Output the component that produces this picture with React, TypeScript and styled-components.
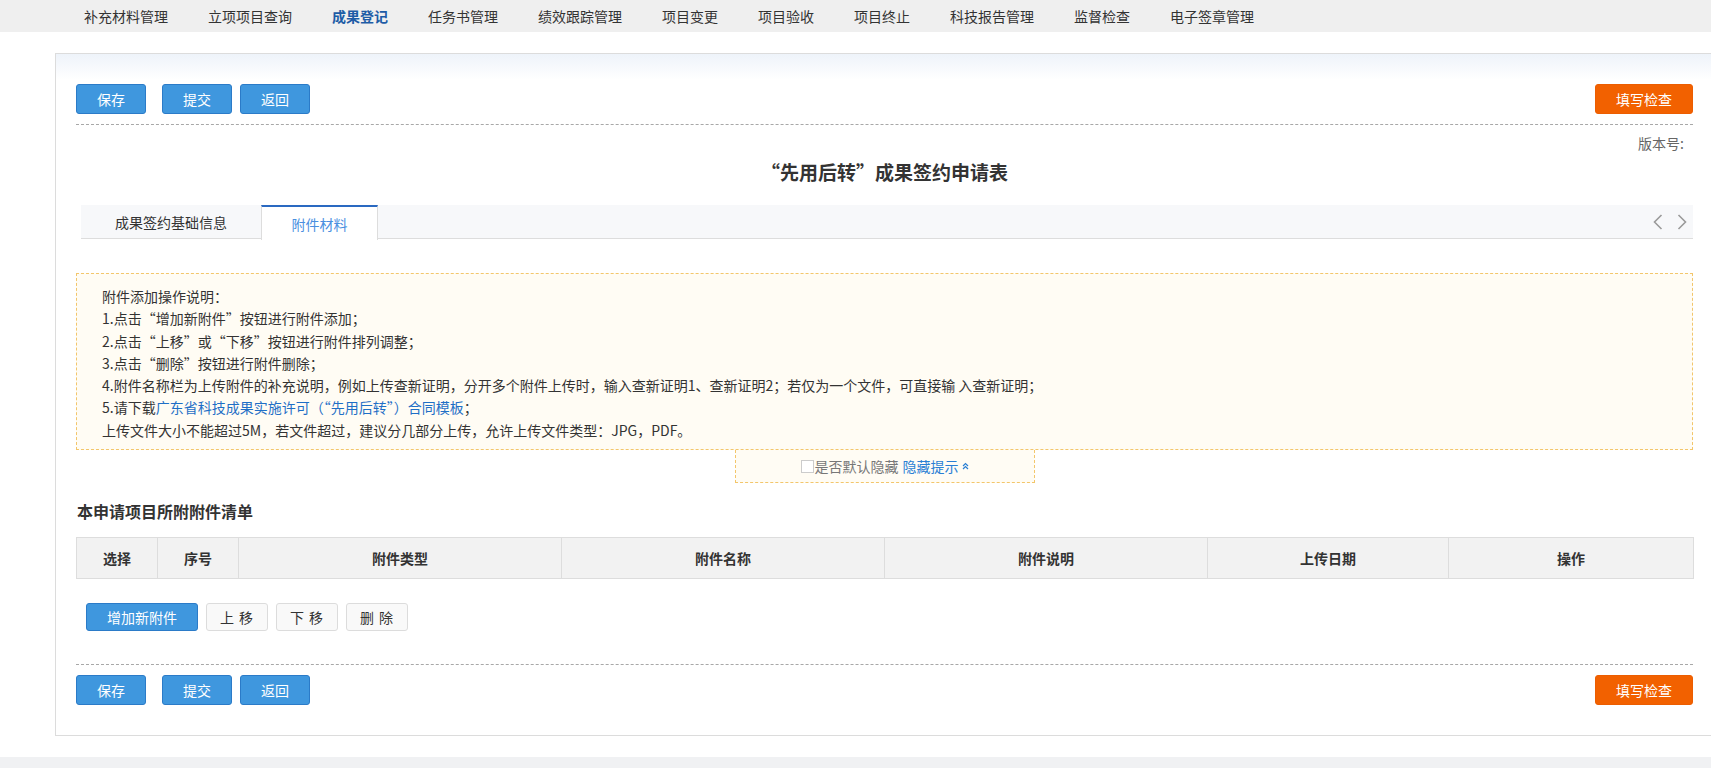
import React from "react";
import styled, { createGlobalStyle } from "styled-components";

const GlobalStyle = createGlobalStyle`
  html, body {
    margin: 0;
    padding: 0;
    background: #ffffff;
    overflow-x: hidden;
  }
  body {
    font-family: "Microsoft YaHei", "Noto Sans CJK SC", "Noto Sans", sans-serif;
    color: #333333;
    font-size: 14px;
  }
  * { box-sizing: border-box; }
`;

const Nav = styled.nav`
  height: 32px;
  background: #efefef;
  display: flex;
  align-items: center;
  padding-left: 64px;
`;

const NavItem = styled.a<{ $active?: boolean }>`
  padding: 0 20px;
  line-height: 32px;
  font-size: 14px;
  color: ${(p) => (p.$active ? "#1d5ca6" : "#333333")};
  font-weight: ${(p) => (p.$active ? 700 : 400)};
  text-decoration: none;
  white-space: nowrap;
`;

const Main = styled.main`
  padding: 21px 0 0 55px;
`;

const Card = styled.section`
  width: 1659px;
  border: 1px solid #dcdcdc;
  padding: 30px 20px 30px 20px;
  background: linear-gradient(#eef3fa 0px, #ffffff 26px);
`;

const Toolbar = styled.div<{ $mt?: number }>`
  display: flex;
  justify-content: space-between;
  align-items: center;
  margin-top: ${(p) => p.$mt ?? 0}px;
`;

const Group = styled.div`
  display: flex;
  align-items: center;
`;

const Btn = styled.button<{ $mr?: number; $w?: number; $h?: number }>`
  width: ${(p) => p.$w ?? 70}px;
  height: ${(p) => p.$h ?? 30}px;
  margin-right: ${(p) => p.$mr ?? 0}px;
  background: #3f97de;
  border: 1px solid #2b7bc8;
  border-radius: 3px;
  color: #ffffff;
  font-family: inherit;
  font-size: 14px;
  padding: 0;
  display: inline-flex;
  align-items: center;
  justify-content: center;
  cursor: pointer;
`;

const CheckBtn = styled(Btn)`
  width: 98px;
  background: #f26100;
  border-color: #ec5d00;
`;

const PlainBtn = styled.button`
  width: 62px;
  height: 28px;
  background: #f9f9f9;
  border: 1px solid #dcdcdc;
  border-radius: 3px;
  color: #333333;
  font-family: inherit;
  font-size: 14px;
  padding: 0;
  display: inline-flex;
  align-items: center;
  justify-content: center;
  letter-spacing: 1px;
`;

const Dashed = styled.hr<{ $mt: number }>`
  margin: ${(p) => p.$mt}px 0 0 0;
  border: none;
  border-top: 1px dashed #a8a8a8;
  height: 0;
`;

const Version = styled.div`
  margin-top: 8px;
  text-align: right;
  padding-right: 9px;
  line-height: 20px;
  color: #666666;
  font-size: 14px;
`;

const Title = styled.h1`
  margin: 7px 0 0 0;
  text-align: center;
  font-size: 19px;
  font-weight: 700;
  line-height: 24px;
  color: #333333;
`;

const TabBar = styled.div`
  margin: 21px 0 0 5px;
  height: 34px;
  background: #f7f8fa;
  border-bottom: 1px solid #dddddd;
  display: flex;
  align-items: stretch;
`;

const Tab = styled.div<{ $active?: boolean; $w: number }>`
  width: ${(p) => p.$w}px;
  display: flex;
  align-items: center;
  justify-content: center;
  font-size: 14px;
  color: ${(p) => (p.$active ? "#4a8fdf" : "#333333")};
  background: ${(p) => (p.$active ? "#ffffff" : "transparent")};
  border-top: ${(p) => (p.$active ? "2px solid #2a69c1" : "none")};
  border-left: ${(p) => (p.$active ? "1px solid #dddddd" : "none")};
  border-right: ${(p) => (p.$active ? "1px solid #dddddd" : "none")};
  height: ${(p) => (p.$active ? "35px" : "33px")};
  margin-bottom: ${(p) => (p.$active ? "-1px" : "0")};
`;

const Arrows = styled.div`
  margin-left: auto;
  display: flex;
  align-items: center;
  gap: 14px;
  padding-right: 6px;
`;

const Notice = styled.div`
  margin-top: 34px;
  border: 1px dashed #f3c66b;
  background: #fffcf4;
  padding: 11px 20px 8px 25px;
  line-height: 22.3px;
  font-size: 14px;
  color: #333333;
`;

const NoticeLine = styled.div``;

const Link = styled.a`
  color: #1f6fc6;
  text-decoration: none;
`;

const Toggle = styled.div`
  width: 300px;
  height: 33px;
  margin: 0 auto;
  border: 1px dashed #f3c66b;
  border-top: none;
  background: #fffcf4;
  display: flex;
  align-items: center;
  justify-content: center;
  font-size: 14px;
  color: #777777;
`;

const Check = styled.span`
  width: 13px;
  height: 13px;
  border: 1px solid #cccccc;
  background: #ffffff;
  display: inline-block;
  margin-right: 1px;
`;

const ToggleLink = styled.a`
  color: #2a7fd4;
  text-decoration: none;
  margin-left: 4px;
  display: inline-flex;
  align-items: center;
  gap: 3px;
`;

const SectionTitle = styled.h2`
  margin: 17px 0 0 1px;
  font-size: 16px;
  font-weight: 700;
  line-height: 22px;
  color: #333333;
`;

const Table = styled.table`
  margin-top: 15px;
  width: 1617px;
  border-collapse: collapse;
  table-layout: fixed;
`;

const Th = styled.th`
  height: 41px;
  padding: 0;
  background: #f2f2f2;
  border: 1px solid #dddddd;
  font-size: 14px;
  font-weight: 700;
  color: #333333;
  text-align: center;
`;

const ActionRow = styled.div`
  margin-top: 24px;
  padding-left: 10px;
  display: flex;
  gap: 8px;
`;

const Footer = styled.footer`
  margin-top: 21px;
  height: 40px;
  background: #f0f1f3;
`;

const navItems = [
  "补充材料管理",
  "立项项目查询",
  "成果登记",
  "任务书管理",
  "绩效跟踪管理",
  "项目变更",
  "项目验收",
  "项目终止",
  "科技报告管理",
  "监督检查",
  "电子签章管理",
];

const columns: [string, number][] = [
  ["选择", 81],
  ["序号", 81],
  ["附件类型", 323],
  ["附件名称", 323],
  ["附件说明", 323],
  ["上传日期", 241],
  ["操作", 245],
];

const Chevron = ({ dir }: { dir: "left" | "right" }) => (
  <svg width="10" height="16" viewBox="0 0 10 16" fill="none">
    <path
      d={dir === "left" ? "M8.5 1 L1.5 8 L8.5 15" : "M1.5 1 L8.5 8 L1.5 15"}
      stroke="#9a9a9a"
      strokeWidth="1.6"
    />
  </svg>
);

const DoubleUp = () => (
  <svg width="7" height="8" viewBox="0 0 7 8" fill="none">
    <path d="M1 4 L3.5 1.5 L6 4 M1 7 L3.5 4.5 L6 7" stroke="#2a7fd4" strokeWidth="1.2" />
  </svg>
);

function ButtonBar({ mt }: { mt?: number }) {
  return (
    <Toolbar $mt={mt}>
      <Group>
        <Btn $mr={16}>保存</Btn>
        <Btn $mr={8}>提交</Btn>
        <Btn>返回</Btn>
      </Group>
      <CheckBtn>填写检查</CheckBtn>
    </Toolbar>
  );
}

export default function App() {
  return (
    <>
      <GlobalStyle />
      <Nav>
        {navItems.map((n) => (
          <NavItem key={n} $active={n === "成果登记"}>
            {n}
          </NavItem>
        ))}
      </Nav>
      <Main>
        <Card>
          <ButtonBar />
          <Dashed $mt={10} />
          <Version>版本号:</Version>
          <Title>“先用后转”成果签约申请表</Title>
          <TabBar>
            <Tab $w={180}>成果签约基础信息</Tab>
            <Tab $w={117} $active>
              附件材料
            </Tab>
            <Arrows>
              <Chevron dir="left" />
              <Chevron dir="right" />
            </Arrows>
          </TabBar>
          <Notice>
            <NoticeLine>附件添加操作说明：</NoticeLine>
            <NoticeLine>1.点击“增加新附件”按钮进行附件添加；</NoticeLine>
            <NoticeLine>2.点击“上移”或“下移”按钮进行附件排列调整；</NoticeLine>
            <NoticeLine>3.点击“删除”按钮进行附件删除；</NoticeLine>
            <NoticeLine>
              4.附件名称栏为上传附件的补充说明，例如上传查新证明，分开多个附件上传时，输入查新证明1、查新证明2；若仅为一个文件，可直接输 入查新证明；
            </NoticeLine>
            <NoticeLine>
              5.请下载<Link>广东省科技成果实施许可（“先用后转”）合同模板</Link>；
            </NoticeLine>
            <NoticeLine>
              上传文件大小不能超过5M，若文件超过，建议分几部分上传，允许上传文件类型：JPG，PDF。
            </NoticeLine>
          </Notice>
          <Toggle>
            <Check />
            是否默认隐藏
            <ToggleLink>
              隐藏提示
              <DoubleUp />
            </ToggleLink>
          </Toggle>
          <SectionTitle>本申请项目所附附件清单</SectionTitle>
          <Table>
            <colgroup>
              {columns.map(([n, w]) => (
                <col key={n} style={{ width: w }} />
              ))}
            </colgroup>
            <thead>
              <tr>
                {columns.map(([n]) => (
                  <Th key={n}>{n}</Th>
                ))}
              </tr>
            </thead>
          </Table>
          <ActionRow>
            <Btn $w={112} $h={28}>
              增加新附件
            </Btn>
            <PlainBtn>上 移</PlainBtn>
            <PlainBtn>下 移</PlainBtn>
            <PlainBtn>删 除</PlainBtn>
          </ActionRow>
          <Dashed $mt={33} />
          <ButtonBar mt={10} />
        </Card>
      </Main>
      <Footer />
    </>
  );
}
